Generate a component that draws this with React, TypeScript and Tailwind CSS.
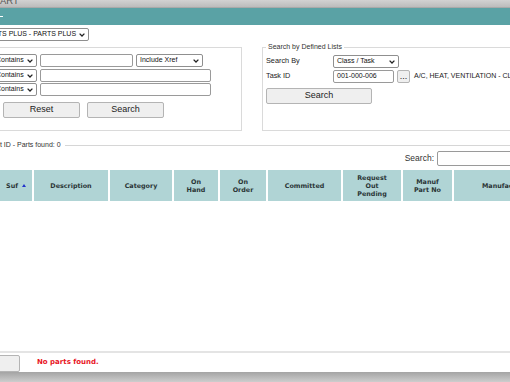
import type { ReactNode } from "react";

const Chevron = () => (
  <svg width="6" height="4" viewBox="0 0 6 4" className="shrink-0">
    <path d="M0.6 0.6 L3 3 L5.4 0.6" stroke="#222" strokeWidth="1.3" fill="none" />
  </svg>
);

const Select = ({ text, className = "" }: { text: string; className?: string }) => (
  <div
    className={`flex items-center justify-between shrink-0 h-[13px] border border-[#8f8f8f] rounded-[2px] bg-white pl-[3px] pr-[3px] text-[7px] text-[#111] ${className}`}
  >
    <span className="whitespace-nowrap">{text}</span>
    <Chevron />
  </div>
);

const Input = ({ className = "", value = "" }: { className?: string; value?: string }) => (
  <div
    className={`flex items-center shrink-0 h-[13px] border border-[#9a9a9a] rounded-[2px] bg-white px-[3px] text-[7px] text-[#111] ${className}`}
  >
    {value}
  </div>
);

const Button = ({ children, className = "" }: { children: ReactNode; className?: string }) => (
  <div
    className={`flex items-center justify-center shrink-0 border border-[#b4b4b4] rounded-[2px] bg-[#efefef] text-[9px] text-[#222] ${className}`}
  >
    {children}
  </div>
);

const Th = ({ children, className = "" }: { children: ReactNode; className?: string }) => (
  <div
    className={`flex items-center justify-center shrink-0 bg-[#b0d4d5] text-center font-['DejaVu_Sans'] font-bold text-[6.4px] leading-[8px] text-[#2a3435] ${className}`}
  >
    {children}
  </div>
);

export default function App() {
  return (
    <div className="w-[510px] h-[382px] overflow-hidden flex flex-col bg-white font-['Liberation_Sans',Arial,sans-serif]">
      <div className="h-[8px] shrink-0 overflow-hidden bg-gradient-to-b from-[#d2d2d2] to-[#bcbcbc] border-b border-[#a9a9a9]">
        <div className="-mt-[4px] text-[9.5px] leading-[10px] text-[#555]">ART</div>
      </div>
      <div className="h-[17px] shrink-0 bg-[#5aa2a5]">
        <div className="mt-[8px] w-[3px] h-[1px] bg-white" />
      </div>

      <div className="flex-1 flex flex-col">
        <div className="mt-[3px] flex">
          <Select text="PARTS PLUS - PARTS PLUS" className="-ml-[20px] w-[109px]" />
        </div>

        <div className="mt-[6px] flex">
          <div className="-ml-[20px] w-[262px] h-[84px] shrink-0 border border-[#dadada] pl-[11px] pt-[6px]">
            <div className="flex gap-[3px]">
              <Select text="Contains" className="w-[45px]" />
              <Input className="w-[93px]" />
              <Select text="Include Xref" className="w-[67px]" />
            </div>
            <div className="mt-[2px] flex gap-[3px]">
              <Select text="Contains" className="w-[45px]" />
              <Input className="w-[171px]" />
            </div>
            <div className="mt-[1px] flex gap-[3px]">
              <Select text="Contains" className="w-[45px]" />
              <Input className="w-[171px]" />
            </div>
            <div className="mt-[6px] ml-[11px] flex gap-[7px]">
              <Button className="w-[77px] h-[16px]">Reset</Button>
              <Button className="w-[77px] h-[16px]">Search</Button>
            </div>
          </div>

          <div className="relative ml-[20px] w-[280px] h-[84px] shrink-0 border border-[#dadada] pl-[3px] pt-[7px] text-[7.3px] text-[#222]">
            <div className="absolute -top-[6px] left-[3px] bg-white px-[2px] text-[7px] leading-[10px] text-[#333]">
              Search by Defined Lists
            </div>
            <div className="flex items-center">
              <span className="w-[67px] shrink-0">Search By</span>
              <Select text="Class / Task" className="w-[66px] h-[12px]" />
            </div>
            <div className="mt-[2px] flex items-center">
              <span className="w-[67px] shrink-0">Task ID</span>
              <Input className="w-[61px]" value="001-000-006" />
              <Button className="ml-[3px] w-[13px] h-[13px] text-[7px]">...</Button>
              <span className="ml-[4px] shrink-0 whitespace-nowrap text-[7px]">A/C, HEAT, VENTILATION - CLIMATE CONTROL</span>
            </div>
            <Button className="mt-[5px] w-[106px] h-[16px]">Search</Button>
          </div>
        </div>

        <div className="mt-[9px] flex items-center h-[10px]">
          <span className="-ml-[11px] whitespace-nowrap text-[7px] text-[#333]">Part ID - Parts found: 0</span>
          <div className="ml-[4px] flex-1 h-px bg-[#d6d6d6]" />
        </div>

        <div className="mt-[1px] flex items-center justify-end h-[15px]">
          <span className="text-[8.5px] text-[#333]">Search:</span>
          <Input className="ml-[3px] w-[75px] h-[15px] -mr-[2px]" />
        </div>

        <div className="mt-[4px] -ml-[20px] flex gap-[2px] h-[31px]">
          <Th className="w-[52px] gap-[4px] pl-[20px]">
            <span>Suf</span>
            <svg width="4" height="3" viewBox="0 0 4 3">
              <path d="M0 3 L2 0 L4 3 Z" fill="#2233cc" />
            </svg>
          </Th>
          <Th className="w-[74px]">Description</Th>
          <Th className="w-[62px]">Category</Th>
          <Th className="w-[44px]">On<br />Hand</Th>
          <Th className="w-[46px]">On<br />Order</Th>
          <Th className="w-[73px]">Committed</Th>
          <Th className="w-[58px]">Request<br />Out<br />Pending</Th>
          <Th className="w-[49px]">Manuf<br />Part No</Th>
          <Th className="w-[120px] justify-start pl-[28px]">Manufacturer</Th>
        </div>

        <div className="flex-1" />

        <div className="h-[21px] border-t-2 border-[#e4e4e4] flex items-end">
          <Button className="-ml-[10px] w-[30px] h-[17px]">{""}</Button>
          <span className="ml-[17px] mb-[5px] font-['DejaVu_Sans'] font-bold text-[7px] text-[#e8141e]">
            No parts found.
          </span>
        </div>
      </div>

      <div className="h-[10px] shrink-0 bg-gradient-to-b from-[#a4a4a4] to-[#cdcdcd]" />
    </div>
  );
}
